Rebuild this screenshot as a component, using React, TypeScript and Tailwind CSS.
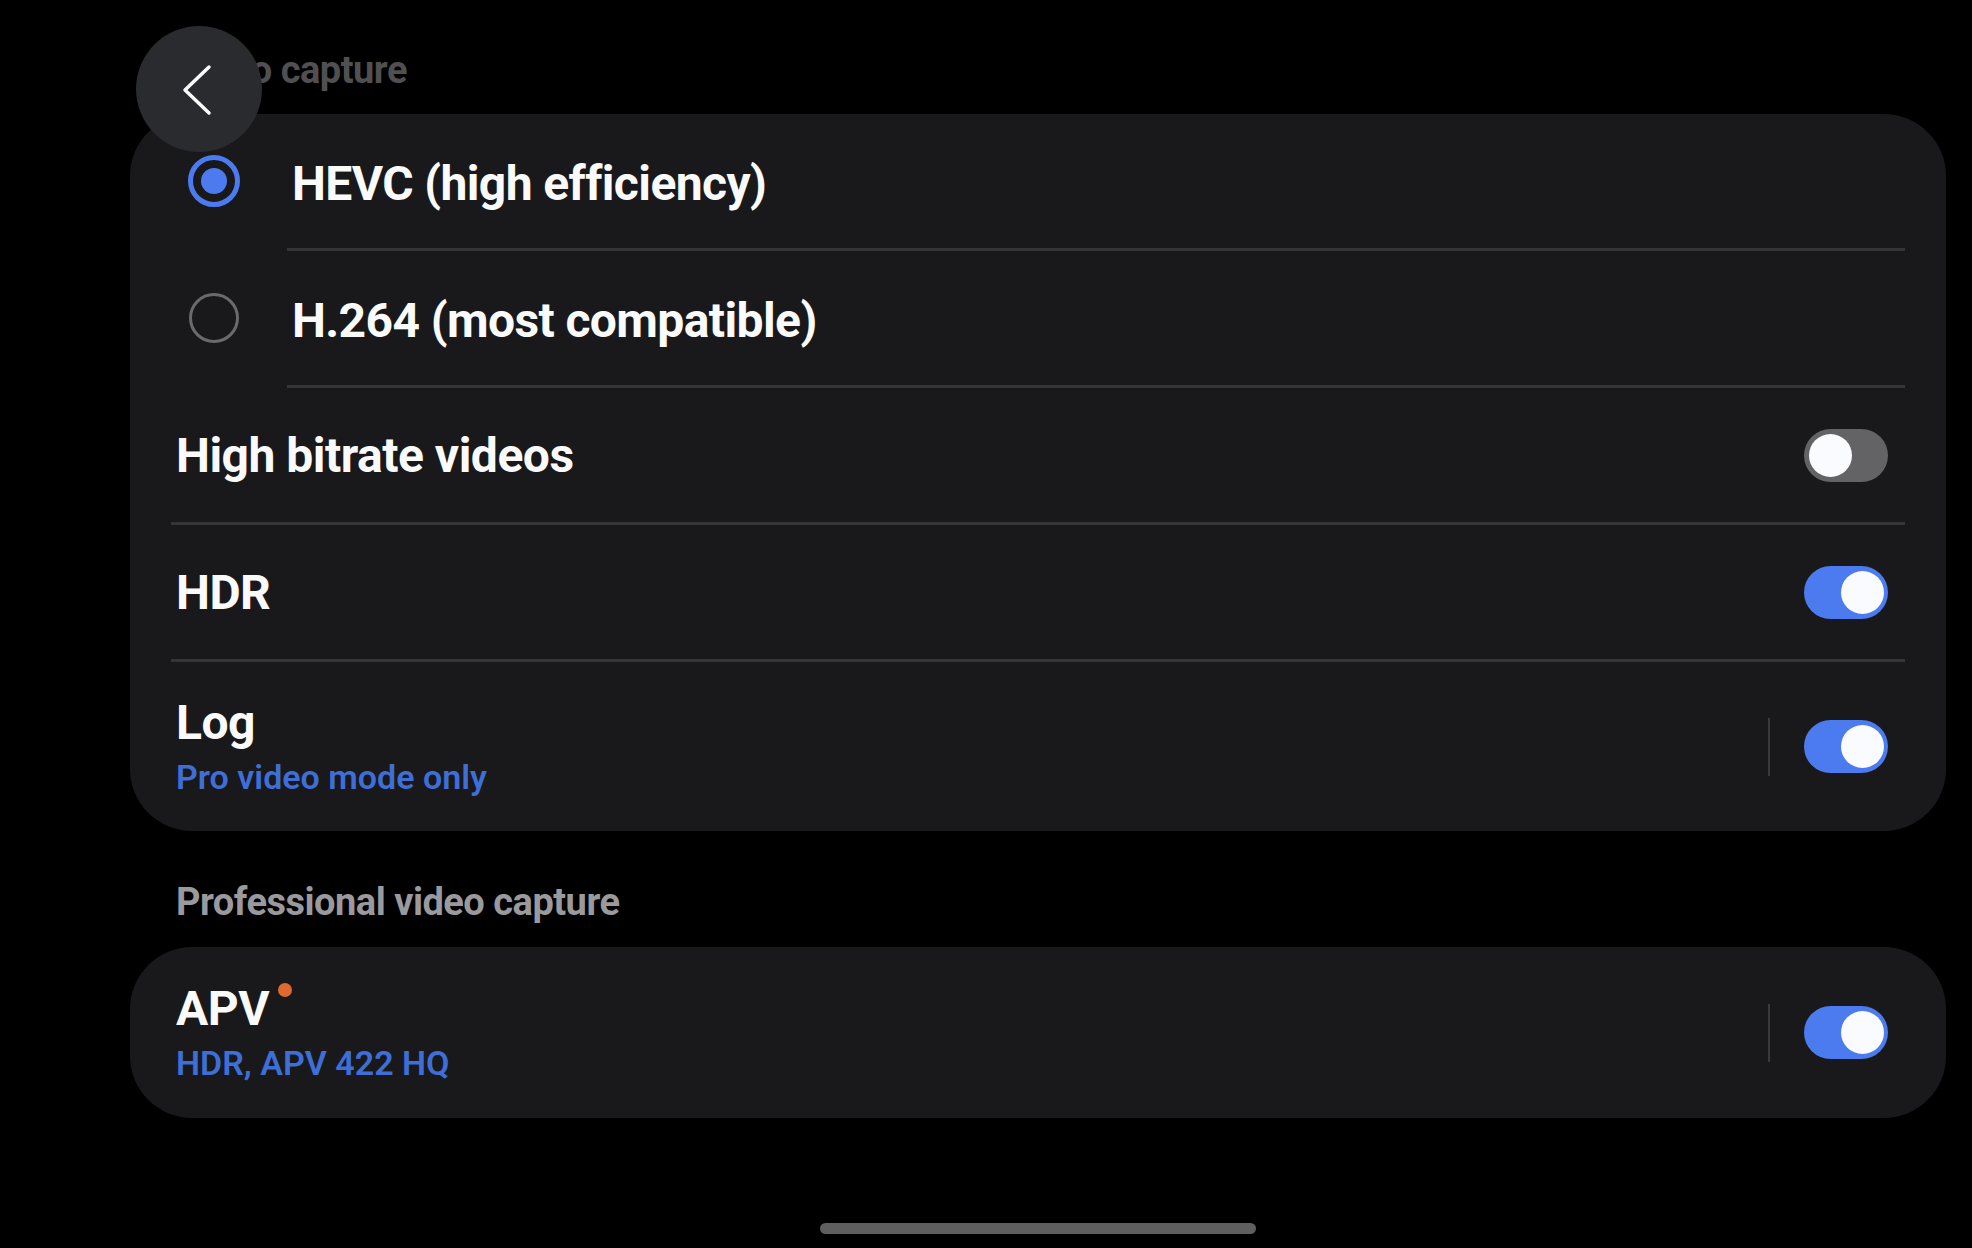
import React from 'react';

const font = { fontFamily: 'Roboto, "Noto Sans", sans-serif' };

const Toggle: React.FC<{ on: boolean }> = ({ on }) => (
  <div
    className={`relative w-[84px] h-[53px] rounded-full shrink-0 ${on ? 'bg-[#4b7bef]' : 'bg-[#636366]'}`}
  >
    <div
      className={`absolute top-[5px] w-[43px] h-[43px] rounded-full bg-[#fafbff] ${on ? 'right-[4px]' : 'left-[5px]'}`}
    />
  </div>
);

const Radio: React.FC<{ checked: boolean }> = ({ checked }) =>
  checked ? (
    <div className="w-[52px] h-[52px] rounded-full border-[5px] border-[#4b7bef] flex items-center justify-center shrink-0">
      <div className="w-[26px] h-[26px] rounded-full bg-[#4b7bef]" />
    </div>
  ) : (
    <div className="w-[50px] h-[50px] rounded-full border-[3px] border-[#6a6a6c] shrink-0 mx-[1px]" />
  );

const Divider: React.FC<{ inset?: boolean }> = ({ inset }) => (
  <div className={`h-[3px] bg-[#353537] ${inset ? 'ml-[116px]' : ''}`} />
);

const RadioRow: React.FC<{ label: string; checked: boolean }> = ({ label, checked }) => (
  <div className="h-[134px] flex items-center pl-[17px]">
    <Radio checked={checked} />
    <span className="ml-[52px] pt-[5px] text-[48px] leading-none font-bold text-[#fafafa] tracking-[-0.6px]">
      {label}
    </span>
  </div>
);

const SwitchRow: React.FC<{ label: string; on: boolean }> = ({ label, on }) => (
  <div className="h-[134px] flex items-center justify-between pl-[5px] pr-[17px]">
    <span className="pt-[2px] text-[48px] leading-none font-bold text-[#fafafa] tracking-[-0.5px]">{label}</span>
    <Toggle on={on} />
  </div>
);

const SubRow: React.FC<{ label: string; sub: string; on: boolean; dot?: boolean; className?: string }> = ({
  label,
  sub,
  on,
  dot,
  className,
}) => (
  <div className={`flex items-center justify-between pl-[5px] pr-[17px] ${className ?? ''}`}>
    <div className="flex flex-col">
      <div className="flex items-start">
        <span className="text-[48px] leading-[56px] font-bold text-[#fafafa] tracking-[-0.5px]">{label}</span>
        {dot && <span className="ml-[9px] mt-[2px] w-[14px] h-[14px] rounded-full bg-[#de6a30]" />}
      </div>
      <span className="mt-[5px] text-[34px] leading-[42px] font-semibold text-[#3e6ed6]">
        {sub}
      </span>
    </div>
    <div className="flex items-center gap-[34px]">
      <div className="w-[2px] h-[58px] bg-[#3a3a3c]" />
      <Toggle on={on} />
    </div>
  </div>
);

export default function App() {
  return (
    <div className="relative w-[1972px] h-[1248px] bg-black overflow-hidden" style={font}>
      <div className="pl-[130px] pr-[26px] pt-[48px]">
        <h2 className="pl-[46px] h-[44px] leading-[44px] text-[38px] font-bold text-[#505052] tracking-[-0.5px]">
          Video capture
        </h2>

        <div className="mt-[22px] rounded-[62px] bg-[#19191b] px-[41px]">
          <RadioRow label="HEVC (high efficiency)" checked />
          <Divider inset />
          <RadioRow label="H.264 (most compatible)" checked={false} />
          <Divider inset />
          <SwitchRow label="High bitrate videos" on={false} />
          <Divider />
          <SwitchRow label="HDR" on />
          <Divider />
          <SubRow label="Log" sub="Pro video mode only" on className="h-[169px]" />
        </div>

        <h2 className="mt-[49px] pl-[46px] h-[44px] leading-[44px] text-[38px] font-bold text-[#9a9a9e] tracking-[-0.5px]">
          Professional video capture
        </h2>

        <div className="mt-[23px] rounded-[62px] bg-[#19191b] px-[41px]">
          <SubRow label="APV" sub="HDR, APV 422 HQ" on dot className="h-[171px]" />
        </div>
      </div>

      {/* back button floats over the header */}
      <button className="absolute left-[136px] top-[26px] w-[126px] h-[126px] rounded-full bg-[#2a2b2e]">
        <svg width="126" height="126" viewBox="0 0 126 126" fill="none">
          <path d="M73 41 L49 64 L73 87" stroke="#fafafa" strokeWidth="3.5" strokeLinecap="round" strokeLinejoin="round" />
        </svg>
      </button>

      <div className="absolute left-[820px] top-[1223px] w-[436px] h-[11px] rounded-full bg-[#5f5f5f]" />
    </div>
  );
}
